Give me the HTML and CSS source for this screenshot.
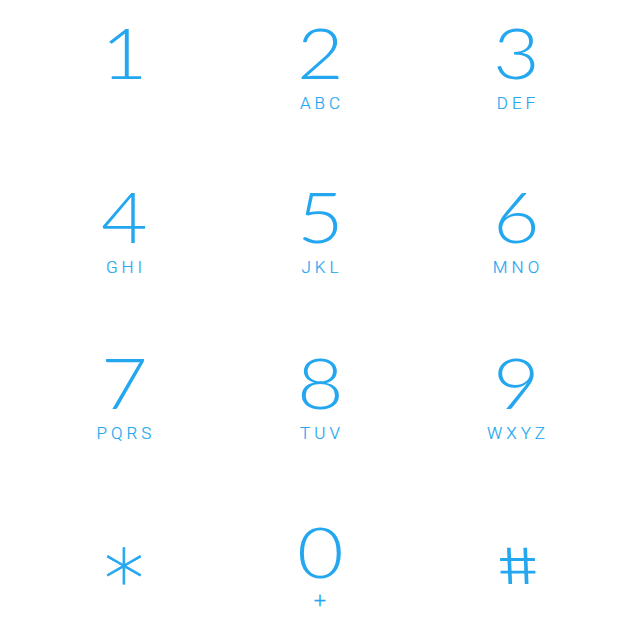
FILE: index.html
```html
<!DOCTYPE html>
<html>
<head>
<meta charset="utf-8">
<link rel="stylesheet" href="styles.css">
</head>
<body>
<div class="pad">
  <div class="key"><span class="digit">1</span><span class="letters">&nbsp;</span></div>
  <div class="key"><span class="digit">2</span><span class="letters">ABC</span></div>
  <div class="key"><span class="digit">3</span><span class="letters">DEF</span></div>
  <div class="key"><span class="digit">4</span><span class="letters">GHI</span></div>
  <div class="key"><span class="digit">5</span><span class="letters">JKL</span></div>
  <div class="key"><span class="digit">6</span><span class="letters">MNO</span></div>
  <div class="key"><span class="digit">7</span><span class="letters">PQRS</span></div>
  <div class="key"><span class="digit">8</span><span class="letters">TUV</span></div>
  <div class="key"><span class="digit">9</span><span class="letters">WXYZ</span></div>
  <div class="key"><span class="digit sym star">∗</span></div>
  <div class="key"><span class="digit">0</span><span class="letters plus">+</span></div>
  <div class="key"><span class="digit sym hash">#</span></div>
</div>
</body>
</html>
```
FILE: styles.css
```css
html, body {
  margin: 0;
  padding: 0;
  background: #ffffff;
}
.pad {
  display: grid;
  grid-template-columns: repeat(3, 196px);
  grid-template-rows: 164px 166px 169px 118px;
  justify-content: center;
  padding-top: 17px;
  color: #25a7f0;
  font-family: "Lato", "DejaVu Sans", sans-serif;
}
.key {
  display: flex;
  flex-direction: column;
  align-items: center;
}
.digit {
  font-size: 70px;
  line-height: 70px;
  height: 70px;
  font-weight: 300;
  transform: scaleX(1.15);
}
.letters {
  margin-top: 8px;
  font-family: "Roboto", "Liberation Sans", sans-serif;
  font-size: 17px;
  line-height: 16px;
  letter-spacing: 4px;
  padding-left: 4px;
  font-weight: 300;
  -webkit-text-stroke: 0.2px #25a7f0;
}
.star {
  font-family: "DejaVu Sans", sans-serif;
  font-size: 80px;
  font-weight: 200;
  line-height: 80px;
  height: 80px;
  padding-top: 8px;
  transform: none;
  -webkit-text-stroke: 0.7px #25a7f0;
}
.hash {
  font-family: "Inter", "DejaVu Sans", sans-serif;
  font-size: 50px;
  font-weight: 300;
  padding-top: 15px;
  transform: scaleX(1.28) skewX(11deg);
}
.plus {
  font-size: 22px;
  font-weight: 300;
  letter-spacing: 0;
  padding-left: 0;
  margin-top: 7px;
}
```
